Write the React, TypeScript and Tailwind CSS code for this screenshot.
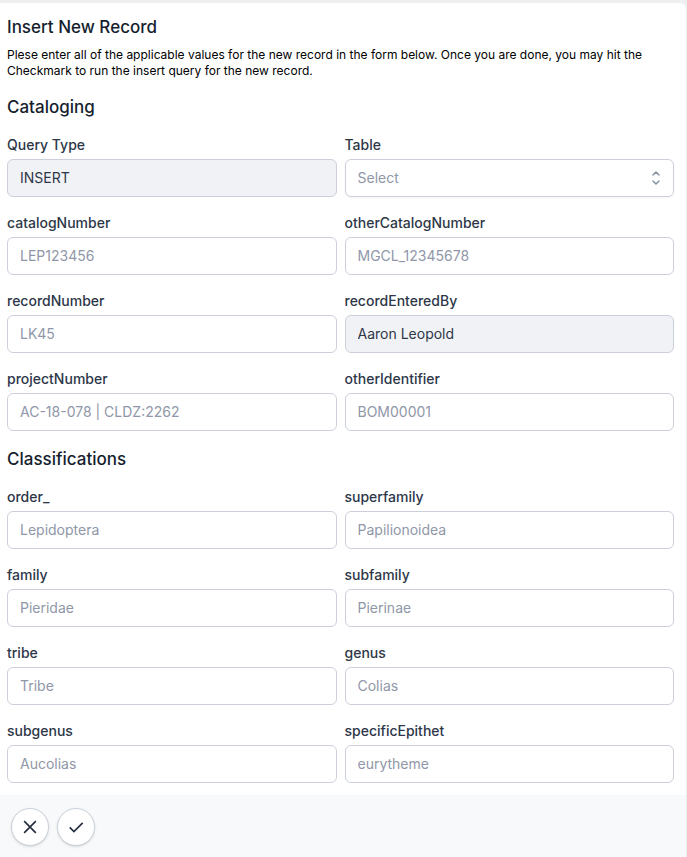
import React, { useId } from "react";

interface Field {
  name: string;
  placeholder?: string;
  value?: string;
  options?: string[];
}

const cataloging: Field[] = [
  { name: "Query Type", value: "INSERT" },
  { name: "Table", options: ["Select"] },
  { name: "catalogNumber", placeholder: "LEP123456" },
  { name: "otherCatalogNumber", placeholder: "MGCL_12345678" },
  { name: "recordNumber", placeholder: "LK45" },
  { name: "recordEnteredBy", value: "Aaron Leopold" },
  { name: "projectNumber", placeholder: "AC-18-078 | CLDZ:2262" },
  { name: "otherIdentifier", placeholder: "BOM00001" },
];

const classifications: Field[] = [
  { name: "order_", placeholder: "Lepidoptera" },
  { name: "superfamily", placeholder: "Papilionoidea" },
  { name: "family", placeholder: "Pieridae" },
  { name: "subfamily", placeholder: "Pierinae" },
  { name: "tribe", placeholder: "Tribe" },
  { name: "genus", placeholder: "Colias" },
  { name: "subgenus", placeholder: "Aucolias" },
  { name: "specificEpithet", placeholder: "eurytheme" },
];

function FormField({ field }: { field: Field }) {
  const id = useId();
  const locked = field.value !== undefined;
  return (
    <div className="flex min-w-0 flex-col gap-1">
      <label htmlFor={id} className="text-sm font-medium text-[#2d3748]">
        {field.name}
      </label>
      {field.options ? (
        <div className="relative">
          <select
            id={id}
            className="block h-[38px] w-full appearance-none rounded-md border border-[#cbd0da] bg-white px-3 text-sm text-[#8f97a8] shadow-xs"
          >
            {field.options.map((option) => (
              <option key={option}>{option}</option>
            ))}
          </select>
          <svg
            className="pointer-events-none absolute inset-y-0 right-2 my-auto size-5 text-[#8790a2]"
            viewBox="0 0 20 20"
            fill="none"
            stroke="currentColor"
            strokeWidth="1.5"
            strokeLinecap="round"
            strokeLinejoin="round"
            aria-hidden="true"
          >
            <path d="M7 7l3-3 3 3m0 6l-3 3-3-3" />
          </svg>
        </div>
      ) : (
        <input
          id={id}
          type="text"
          readOnly={locked}
          defaultValue={field.value}
          placeholder={field.placeholder}
          className={`block h-[38px] w-full rounded-md border border-[#cbd0da] px-3 pb-0.5 text-sm text-[#2d3748] placeholder:text-[#8f97a8] ${
            locked ? "bg-[#f1f2f6]" : "bg-white"
          }`}
        />
      )}
    </div>
  );
}

function Section({ title, fields }: { title: string; fields: Field[] }) {
  return (
    <section className="flex flex-col gap-4">
      <h3 className="text-[17px] leading-6 font-medium text-[#161e2e]">{title}</h3>
      <div className="grid grid-cols-2 gap-x-2 gap-y-4">
        {fields.map((field) => (
          <FormField key={field.name} field={field} />
        ))}
      </div>
    </section>
  );
}

function RoundButton({ label, children }: { label: string; children: React.ReactNode }) {
  return (
    <button
      type="button"
      aria-label={label}
      className="flex size-[38px] items-center justify-center rounded-full border border-[#cbd0da] bg-white text-[#252f3f] shadow-sm"
    >
      <svg
        className="size-5"
        viewBox="0 0 24 24"
        fill="none"
        stroke="currentColor"
        strokeWidth="2"
        aria-hidden="true"
      >
        {children}
      </svg>
    </button>
  );
}

export default function App() {
  return (
    <div className="flex min-h-screen flex-col bg-[#eeeff1] pt-[3px] pr-px font-['Inter',sans-serif]">
      <form className="flex grow flex-col overflow-hidden rounded-tr-md bg-white">
        <div className="flex flex-col gap-4 pt-3 pr-3 pb-3 pl-[7px]">
          <header className="flex flex-col gap-2">
            <h2 className="text-[17px] leading-6 font-medium text-[#161e2e]">Insert New Record</h2>
            <p className="text-xs text-black">
              Plese enter all of the applicable values for the new record in the form below. Once
              you are done, you may hit the Checkmark to run the insert query for the new record.
            </p>
          </header>
          <Section title="Cataloging" fields={cataloging} />
          <Section title="Classifications" fields={classifications} />
        </div>
        <footer className="flex grow items-start gap-2 bg-[#f7f9fb] px-[11px] pt-[13px] pb-[11px]">
          <RoundButton label="Cancel">
            <path d="M5 5l14 14M19 5L5 19" />
          </RoundButton>
          <RoundButton label="Run insert query">
            <path d="M4.500 12.500l5 5L20 7" />
          </RoundButton>
        </footer>
      </form>
    </div>
  );
}
